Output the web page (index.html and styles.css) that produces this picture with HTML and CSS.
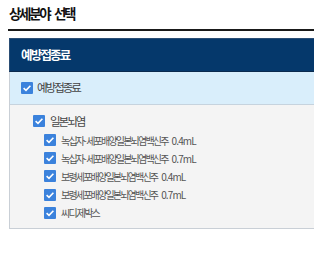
FILE: index.html
```html
<!DOCTYPE html>
<html lang="ko">
<head>
<meta charset="utf-8">
<link rel="stylesheet" href="styles.css">
</head>
<body>
<div class="page">
  <h2 class="title">상세분야 선택</h2>
  <div class="panel">
    <div class="panel-head">예방접종료</div>
    <div class="panel-all">
      <label class="row row-top"><span class="cb"><svg viewBox="0 0 12 12"><path d="M2.6 6.2 L5 8.4 L9.4 3.8" fill="none" stroke="#fff" stroke-width="1.6"/></svg></span><span class="lbl">예방접종료</span></label>
    </div>
    <div class="panel-body">
      <label class="row row-group"><span class="cb"><svg viewBox="0 0 12 12"><path d="M2.6 6.2 L5 8.4 L9.4 3.8" fill="none" stroke="#fff" stroke-width="1.6"/></svg></span><span class="lbl">일본뇌염</span></label>
      <ul class="children">
        <li class="row row-child"><span class="cb"><svg viewBox="0 0 12 12"><path d="M2.6 6.2 L5 8.4 L9.4 3.8" fill="none" stroke="#fff" stroke-width="1.6"/></svg></span><span class="lbl">녹십자<span class="hy">-</span>세포배양일본뇌염백신주 <span class="lat">0.4mL</span></span></li>
        <li class="row row-child"><span class="cb"><svg viewBox="0 0 12 12"><path d="M2.6 6.2 L5 8.4 L9.4 3.8" fill="none" stroke="#fff" stroke-width="1.6"/></svg></span><span class="lbl">녹십자<span class="hy">-</span>세포배양일본뇌염백신주 <span class="lat">0.7mL</span></span></li>
        <li class="row row-child"><span class="cb"><svg viewBox="0 0 12 12"><path d="M2.6 6.2 L5 8.4 L9.4 3.8" fill="none" stroke="#fff" stroke-width="1.6"/></svg></span><span class="lbl">보령세포배양일본뇌염백신주 <span class="lat">0.4mL</span></span></li>
        <li class="row row-child"><span class="cb"><svg viewBox="0 0 12 12"><path d="M2.6 6.2 L5 8.4 L9.4 3.8" fill="none" stroke="#fff" stroke-width="1.6"/></svg></span><span class="lbl">보령세포배양일본뇌염백신주 <span class="lat">0.7mL</span></span></li>
        <li class="row row-child"><span class="cb"><svg viewBox="0 0 12 12"><path d="M2.6 6.2 L5 8.4 L9.4 3.8" fill="none" stroke="#fff" stroke-width="1.6"/></svg></span><span class="lbl">씨디.제박스</span></li>
      </ul>
    </div>
  </div>
</div>
</body>
</html>
```

FILE: styles.css
```css
html, body {
  margin: 0;
  padding: 0;
  background: #fff;
  overflow: hidden;
}
body {
  font-family: "Noto Sans CJK KR", "Noto Sans", sans-serif;
  color: #333;
}
.page {
  width: 420px;
  padding-left: 8px;
  padding-top: 4px;
}
.title {
  margin: 0;
  font-size: 13.5px;
  font-weight: 700;
  line-height: 18px;
  letter-spacing: -2.3px;
  word-spacing: 3px;
  color: #111;
  padding-left: 1px;
  padding-bottom: 7px;
  border-bottom: 2px solid #1a1a1a;
}
.panel {
  margin-top: 7px;
  margin-left: 1px;
  border: 1px solid #c9cfd6;
  border-top: 0;
}
.panel-head {
  background: #05386b;
  border: 1px solid #2a4d74;
  border-bottom-color: #0a2a4d;
  margin: 0 -1px;
  height: 32px;
  line-height: 32px;
  padding-left: 11px;
  color: #fff;
  font-size: 12.5px;
  font-weight: 700;
  letter-spacing: -1.8px;
}
.panel-all {
  background: #d9eefb;
  height: 32px;
  display: flex;
  align-items: center;
  padding-left: 11px;
  border-bottom: 1px solid #c6d3de;
}
.panel-body {
  background: #f4f4f4;
  padding: 6px 0 6px 23px;
}
.row {
  display: flex;
  align-items: center;
  gap: 5px;
}
.cb {
  width: 12px;
  height: 12px;
  background: #3b82dc;
  border-radius: 1px;
  display: flex;
  flex: none;
}
.cb svg {
  width: 12px;
  height: 12px;
}
.row-top { gap: 4px; }
.row-top .lbl {
  font-size: 11.5px;
  color: #444;
  letter-spacing: -2px;
  position: relative;
  top: -1px;
}
.row-group {
  height: 20px;
}
.row-group .lbl {
  font-size: 11.5px;
  color: #444;
  letter-spacing: -2px;
}
.children {
  list-style: none;
  margin: 0;
  padding: 0 0 0 11px;
}
.row-child {
  height: 18.2px;
}
.row-child .lbl {
  font-size: 10px;
  color: #555;
  letter-spacing: -1.8px;
  word-spacing: 3px;
}
.row-child .hy {
  letter-spacing: 0;
  margin-right: -0.5px;
}
.row-child .lat {
  letter-spacing: -0.9px;
}
```
